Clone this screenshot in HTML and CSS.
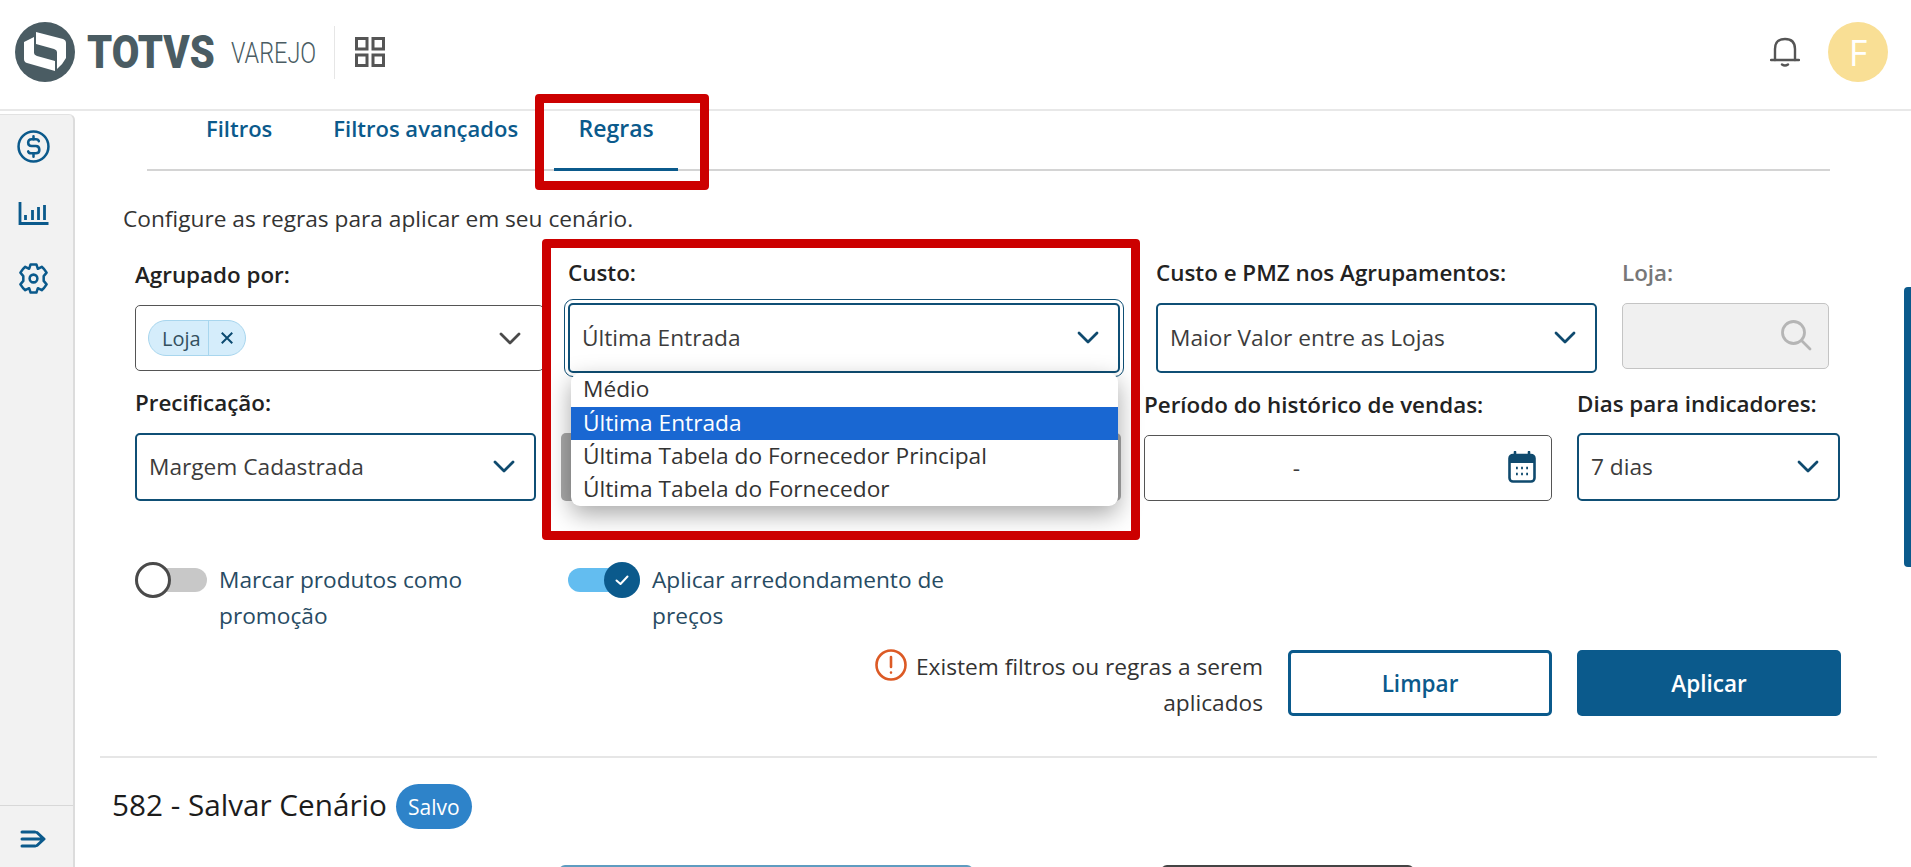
FILE: index.html
```html
<!DOCTYPE html>
<html lang="pt-BR">
<head>
<meta charset="UTF-8" />
<meta name="viewport" content="width=device-width, initial-scale=1" />
<title>TOTVS Varejo - Regras</title>
<link rel="stylesheet" href="styles.css">
</head>
<body>

<header class="topbar">
  <svg class="logo-mark" viewBox="0 0 60 60">
    <circle cx="30" cy="30" r="30" fill="#4a5c63"/>
    <path d="M21 10 L48 17 Q51 18 51 21 V36 Q48 42 42 47 V30 Q42 28 39 27 L21 22 Z" fill="#fff"/>
    <path d="M9 20 L19 15 V31 Q19 33 22 34 L40 39 V49 L12 41 Q9 40 9 37 Z" fill="#fff"/>
  </svg>
  <span class="logo-name"><span>TOTVS</span></span>
  <span class="logo-sub"><span>VAREJO</span></span>
  <span class="logo-sep"></span>
  <svg class="apps-icon" viewBox="0 0 30 30" fill="none" stroke="#555" stroke-width="3">
    <rect x="1.5" y="1.5" width="10.5" height="10.5"/>
    <rect x="18" y="1.5" width="10.5" height="10.5"/>
    <rect x="1.5" y="18" width="10.5" height="10.5"/>
    <rect x="18" y="18" width="10.5" height="10.5"/>
  </svg>
  <svg class="bell-icon" viewBox="0 0 30 30" fill="none" stroke="#555" stroke-width="2.4" stroke-linecap="round">
    <path d="M5 23 V12 Q5 2 15 2 Q25 2 25 12 V23"/>
    <path d="M1 23 H29"/>
    <path d="M12 27.5 Q15 29.5 18 27.5"/>
  </svg>
  <div class="avatar">F</div>
</header>

<div class="layout">
  <aside class="sidebar">
    <nav class="side-icons">
      <svg viewBox="0 0 34 34" fill="none" stroke="#0b5a8c" stroke-width="2.6" stroke-linecap="round">
        <circle cx="17" cy="17" r="15.4"/>
        <path d="M22.5 11.5 Q22 9.5 19.5 9.5 H15 Q11.5 9.5 11.5 13 Q11.5 16.6 15 16.6 H19.5 Q23 16.6 23 20.6 Q23 24 19.5 24 H14.5 Q12 24 11.5 22"/>
        <path d="M17 6.5 V9.5 M17 24 V27.5"/>
      </svg>
      <svg viewBox="0 0 33 33" fill="none" stroke="#0b5a8c" stroke-width="2.8">
        <path d="M3 6 V27.500 H31.500"/>
        <path d="M8.500 19 V24 M15.500 14 V24 M21.500 11 V24 M27.500 9 V24"/>
      </svg>
      <svg viewBox="0 0 34 34" fill="none" stroke="#0b5a8c" stroke-width="2.6" stroke-linejoin="round">
        <path d="M14 2.500 H20 L21.500 7 L25.500 5 Q28 7 30.500 11 L27.500 14.500 V19.500 L30.500 23 Q28 27 25.500 29 L21.500 27 L20 31.500 H14 L12.500 27 L8.500 29 Q6 27 3.500 23 L6.500 19.500 V14.500 L3.500 11 Q6 7 8.500 5 L12.500 7 Z"/>
        <circle cx="17" cy="17" r="4"/>
      </svg>
    </nav>
    <div class="side-foot">
      <svg viewBox="0 0 26 20" fill="none" stroke="#0b5a8c" stroke-width="3" stroke-linecap="round" stroke-linejoin="round">
        <path d="M2 3 H15 M2 10 H23 M2 17 H15 M17 3.500 L24 10 L17 16.500"/>
      </svg>
    </div>
  </aside>

  <main class="content">
    <div class="tabs">
      <div class="tab">Filtros</div>
      <div class="tab tab-wide">Filtros avançados</div>
      <div class="tab active">Regras</div>
    </div>

    <p class="intro">Configure as regras para aplicar em seu cenário.</p>

    <div class="form-row row-one">
      <div class="field f-group">
        <label>Agrupado por:</label>
        <div class="control plain">
          <span class="chip"><span class="chip-text">Loja</span><span class="chip-close">
            <svg viewBox="0 0 12 12" fill="none" stroke="#0b4a70" stroke-width="1.700"><path d="M1.500 1.500 L10.500 10.500 M10.500 1.500 L1.500 10.500"/></svg>
          </span></span>
          <svg class="chevron grey" viewBox="0 0 22 13"><path d="M2 2 L11 11 L20 2"/></svg>
        </div>
      </div>
      <div class="field f-cost">
        <label>Custo:</label>
        <div class="control focused">
          <span>Última Entrada</span>
          <svg class="chevron" viewBox="0 0 22 13"><path d="M2 2 L11 11 L20 2"/></svg>
        </div>
      </div>
      <div class="field f-pmz">
        <label>Custo e PMZ nos Agrupamentos:</label>
        <div class="control">
          <span>Maior Valor entre as Lojas</span>
          <svg class="chevron" viewBox="0 0 22 13"><path d="M2 2 L11 11 L20 2"/></svg>
        </div>
      </div>
      <div class="field f-store">
        <label class="off">Loja:</label>
        <div class="control disabled">
          <svg class="search" viewBox="0 0 32 32" fill="none" stroke="#b5b5b5" stroke-width="2.800" stroke-linecap="round">
            <circle cx="13.500" cy="13.500" r="11"/>
            <path d="M21.500 21.500 L30 30"/>
          </svg>
        </div>
      </div>
    </div>

    <div class="form-row row-two">
      <div class="field f-price">
        <label>Precificação:</label>
        <div class="control">
          <span>Margem Cadastrada</span>
          <svg class="chevron" viewBox="0 0 22 13"><path d="M2 2 L11 11 L20 2"/></svg>
        </div>
      </div>
      <div class="field f-hidden">
        <label>&nbsp;</label>
        <div class="control behind"></div>
      </div>
      <div class="field f-period">
        <label>Período do histórico de vendas:</label>
        <div class="control plain date">
          <span class="date-value">-</span>
          <svg class="calendar" viewBox="0 0 28 32">
            <path d="M7 1 V6 M21 1 V6" stroke="#0f4a6e" stroke-width="2.600" stroke-linecap="round"/>
            <rect x="1.500" y="4" width="25" height="26.500" rx="3.500" fill="none" stroke="#0f4a6e" stroke-width="2.600"/>
            <path d="M1.500 8 Q1.500 4 5 4 H23 Q26.500 4 26.500 8 V12 H1.500 Z" fill="#0f4a6e"/>
            <path d="M8 17 H9.800 M13.100 17 H14.900 M18.200 17 H20 M8 23 H9.800 M13.100 23 H14.900 M18.200 23 H20" stroke="#0f4a6e" stroke-width="2.400"/>
          </svg>
        </div>
      </div>
      <div class="field f-days">
        <label>Dias para indicadores:</label>
        <div class="control">
          <span>7 dias</span>
          <svg class="chevron" viewBox="0 0 22 13"><path d="M2 2 L11 11 L20 2"/></svg>
        </div>
      </div>
    </div>

    <div class="toggles">
      <div class="toggle-item t-promo">
        <span class="switch"><span class="knob"></span></span>
        <span class="toggle-label">Marcar produtos como promoção</span>
      </div>
      <div class="toggle-item t-round">
        <span class="switch on"><span class="knob">
          <svg viewBox="0 0 14 11" fill="none" stroke="#fff" stroke-width="2" stroke-linecap="round" stroke-linejoin="round"><path d="M1.500 5.500 L5.500 9 L12.500 1.500"/></svg>
        </span></span>
        <span class="toggle-label">Aplicar arredondamento de preços</span>
      </div>
    </div>

    <div class="actions">
      <svg class="warn" viewBox="0 0 32 32" fill="none" stroke="#dc5a25" stroke-width="2.600" stroke-linecap="round">
        <circle cx="16" cy="16" r="14.500"/>
        <path d="M16 8 V18 M16 23.500 V23.600"/>
      </svg>
      <p class="warn-text">Existem filtros ou regras a serem aplicados</p>
      <button class="btn outline">Limpar</button>
      <button class="btn solid">Aplicar</button>
    </div>

    <div class="scenario">
      <h2>582 - Salvar Cenário</h2>
      <span class="badge">Salvo</span>
    </div>

    <div class="cards">
      <div class="card blue"></div>
      <div class="card dark"></div>
    </div>
  </main>
</div>

<!-- dropdown aberto e marcacoes vermelhas ficam por cima do form -->
<ul class="dropdown">
  <li>Médio</li>
  <li class="selected">Última Entrada</li>
  <li>Última Tabela do Fornecedor Principal</li>
  <li>Última Tabela do Fornecedor</li>
</ul>
<div class="mark mark-tab"></div>
<div class="mark mark-cost"></div>
<div class="scroll-thumb"></div>

</body>
</html>
```

FILE: styles.css
```css
* { box-sizing: border-box; }
html, body { margin: 0; height: 867px; overflow: hidden; }
body { font-family: "Open Sans", "Noto Sans", sans-serif; font-size: 22.7px; color: #222; background: #fff; position: relative; }

/* topo */
.topbar { display: flex; align-items: center; height: 111px; padding: 0 23px 5px 15px; background: #fff; border-bottom: 2px solid #e8e8e8; }
.logo-mark { width: 60px; height: 60px; margin-right: 12px; }
.logo-name { font-family: "Roboto", sans-serif; font-weight: 900; font-size: 46px; color: #4a5c63; width: 131px; margin-right: 13px; white-space: nowrap; }
.logo-name span { display: inline-block; transform: scaleX(.87); transform-origin: left center; }
.logo-sub { font-family: "Roboto", sans-serif; font-weight: 300; font-size: 30px; color: #4a5c63; width: 85px; margin-right: 18px; white-space: nowrap; }
.logo-sub span { display: inline-block; transform: scaleX(.78); transform-origin: left center; }
.logo-sep { width: 1px; height: 53px; background: #e6e6e6; margin-right: 20px; }
.apps-icon { width: 30px; height: 30px; }
.bell-icon { width: 30px; height: 30px; margin-left: auto; margin-right: 28px; }
.avatar { width: 60px; height: 60px; border-radius: 50%; background: #f9df95; color: #fff; font-size: 36px; display: flex; align-items: center; justify-content: center; }

.layout { display: flex; height: 756px; }

/* barra lateral */
.sidebar { width: 75px; margin-top: 3px; background: #f2f2f2; border-right: 2px solid #dcdcdc; border-top: 1px solid #e2e2e2; border-top-right-radius: 6px; display: flex; flex-direction: column; justify-content: space-between; }
.side-icons { display: flex; flex-direction: column; align-items: center; gap: 33px; padding: 15px 7px 0 0; }
.side-icons svg { width: 33px; height: 33px; display: block; }
.side-foot { height: 62px; border-top: 1px solid #d8d8d8; padding: 4px 7px 0 0; display: flex; align-items: center; justify-content: center; }
.side-foot svg { width: 26px; height: 20px; }

.content { flex: 1; padding: 0 0 0 25px; min-width: 0; }

/* abas */
.tabs { display: flex; height: 60px; margin: 0 81px 0 47px; padding-left: 59px; border-bottom: 2px solid #d4d4d4; color: #0b5a8c; font-weight: 600; font-size: 22px; }
.tab { padding-top: 1px; margin-right: 61px; height: 60px; line-height: 32px; }
.tab.active { width: 124px; margin-left: -25px; text-align: center; border-bottom: 3px solid #0b5a8c; margin-right: 0; font-size: 23px; }

.intro { margin: 34px 0 0 23px; line-height: 28px; color: #333; }

.form-row { display: flex; padding-left: 35px; }
.field { display: flex; flex-direction: column; }
label { display: block; font-weight: 600; font-size: 22.4px; line-height: 28px; color: #222; white-space: nowrap; }
label.off { color: #777; }
.row-one { margin-top: 28px; }
.row-one label { margin: -2px 0 2px; }
.row-one .f-group label { margin: 0; }
.row-two { margin-top: 17px; }
.f-price label { margin: -1px 0 1px; }
.f-period label { margin: 1px 0 -1px; }

.control { height: 70px; margin-top: 14px; border: 2px solid #0f4f75; border-radius: 5px; background: #fff; display: flex; align-items: center; justify-content: space-between; padding: 0 19px 2px 12px; color: #3c3c3c; white-space: nowrap; }
.control.plain { border: 1px solid #555; }
.control.focused { outline: 1px solid #0f4f75; outline-offset: 3px; }
.control.disabled { background: #f0f0f0; border: 1px solid #c4c4c4; justify-content: flex-end; height: 66px; padding-right: 14px; }
.control.behind { background: #a9a9a9; border: 0; }

.f-group { width: 409px; margin-right: 24px; }
.f-group .control { height: 66px; margin-top: 16px; padding-left: 12px; padding-right: 22px; padding-bottom: 0; }
.f-cost { width: 552px; margin-right: 36px; }
.f-pmz { width: 441px; margin-right: 25px; }
.f-store { width: 207px; }
.f-price { width: 401px; margin-right: 25px; }
.f-hidden { width: 560px; margin-right: 23px; }
.f-period { width: 408px; margin-right: 25px; }
.f-days { width: 263px; }
.row-two .control { height: 68px; margin-top: 15px; }
.row-two .control.date { height: 66px; margin-top: 17px; padding-right: 15px; }

.chevron { width: 22px; height: 13px; fill: none; stroke: #0f4a6e; stroke-width: 2.800; stroke-linecap: round; stroke-linejoin: round; flex: none; }
.chevron.grey { stroke: #4a4a4a; }
.search { width: 32px; height: 32px; margin-right: 2px; }
.date-value { flex: 1; text-align: center; padding-right: 72px; }
.calendar { width: 28px; height: 32px; flex: none; }

.chip { display: inline-flex; align-items: center; height: 36px; border: 1px solid #a8d6ee; border-radius: 18px; background: #d5edfb; font-size: 20px; }
.chip-text { padding: 0 7px 0 13px; color: #33505f; }
.chip-close { height: 100%; padding: 0 11px; border-left: 1px solid #a8d6ee; display: flex; align-items: center; }
.chip-close svg { width: 14px; height: 14px; }

/* toggles */
.toggles { display: flex; margin: 61px 0 0 35px; }
.toggle-item { display: flex; color: #274b63; line-height: 36px; }
.t-promo { width: 433px; }
.t-round { width: 400px; }
.toggle-label { margin-left: 12px; }
.t-promo .toggle-label { width: 290px; }
.t-round .toggle-label { width: 310px; }
.switch { flex: none; position: relative; width: 72px; height: 24px; margin-top: 6px; border-radius: 12px; background: #c8c8c8; }
.knob { position: absolute; left: 0; top: -6px; width: 36px; height: 36px; border-radius: 50%; background: #fff; border: 3px solid #4a4a4a; }
.switch.on { background: #63bdf0; }
.switch.on .knob { left: 36px; background: #0b5a8c; border: 0; display: flex; align-items: center; justify-content: center; }
.knob svg { width: 14px; height: 11px; }

/* acoes */
.actions { display: flex; align-items: flex-start; justify-content: flex-end; margin: 16px 70px 0 0; height: 66px; }
.warn { width: 32px; height: 32px; flex: none; margin-top: -1px; margin-right: 4px; }
.warn-text { margin: -1px 25px 0 0; width: 352px; text-align: right; line-height: 36px; color: #333; }
.btn { width: 264px; height: 66px; border-radius: 5px; font-family: inherit; font-size: 22.5px; font-weight: 600; }
.btn.outline { background: #fff; color: #0b5a8c; border: 3px solid #0b5a8c; margin-right: 25px; }
.btn.solid { background: #0b5a8c; color: #fff; border: 0; }

/* cenario */
.scenario { display: flex; align-items: center; margin: 40px 34px 0 0; padding-top: 26px; border-top: 2px solid #e6e6e6; padding-left: 12px; }
.scenario h2 { margin: -5px 9px 0 0; font-size: 29.7px; font-weight: 500; line-height: 45px; color: #1c1c1c; }
.badge { width: 76px; height: 45px; border-radius: 23px; background: #2e83c9; color: #fff; font-size: 21px; display: flex; align-items: center; justify-content: center; }

.cards { display: flex; margin: 36px 0 0 459px; }
.card { height: 8px; border-radius: 6px 6px 0 0; }
.card.blue { width: 414px; border-top: 2px solid #5f9cc0; margin-right: 188px; }
.card.dark { width: 253px; border-top: 2px solid #444; }

/* dropdown e marcacoes */
.dropdown { position: absolute; left: 571px; top: 373px; width: 547px; margin: 0; padding: 0; list-style: none; background: #fff; border-radius: 9px; overflow: hidden; box-shadow: 0 8px 24px rgba(0,0,0,.35); color: #333; }
.dropdown li { height: 33px; line-height: 32px; padding-left: 12px; }
.dropdown li:first-child { height: 34px; }
.dropdown li.selected { background: #1967d2; color: #fff; }

.mark { position: absolute; border: 9px solid #cc0000; border-radius: 4px; }
.mark-tab { left: 535px; top: 94px; width: 174px; height: 96px; }
.mark-cost { left: 542px; top: 239px; width: 598px; height: 301px; }

.scroll-thumb { position: absolute; left: 1904px; top: 287px; width: 7px; height: 280px; border-radius: 4px 0 0 4px; background: #0b5a8c; }
```
